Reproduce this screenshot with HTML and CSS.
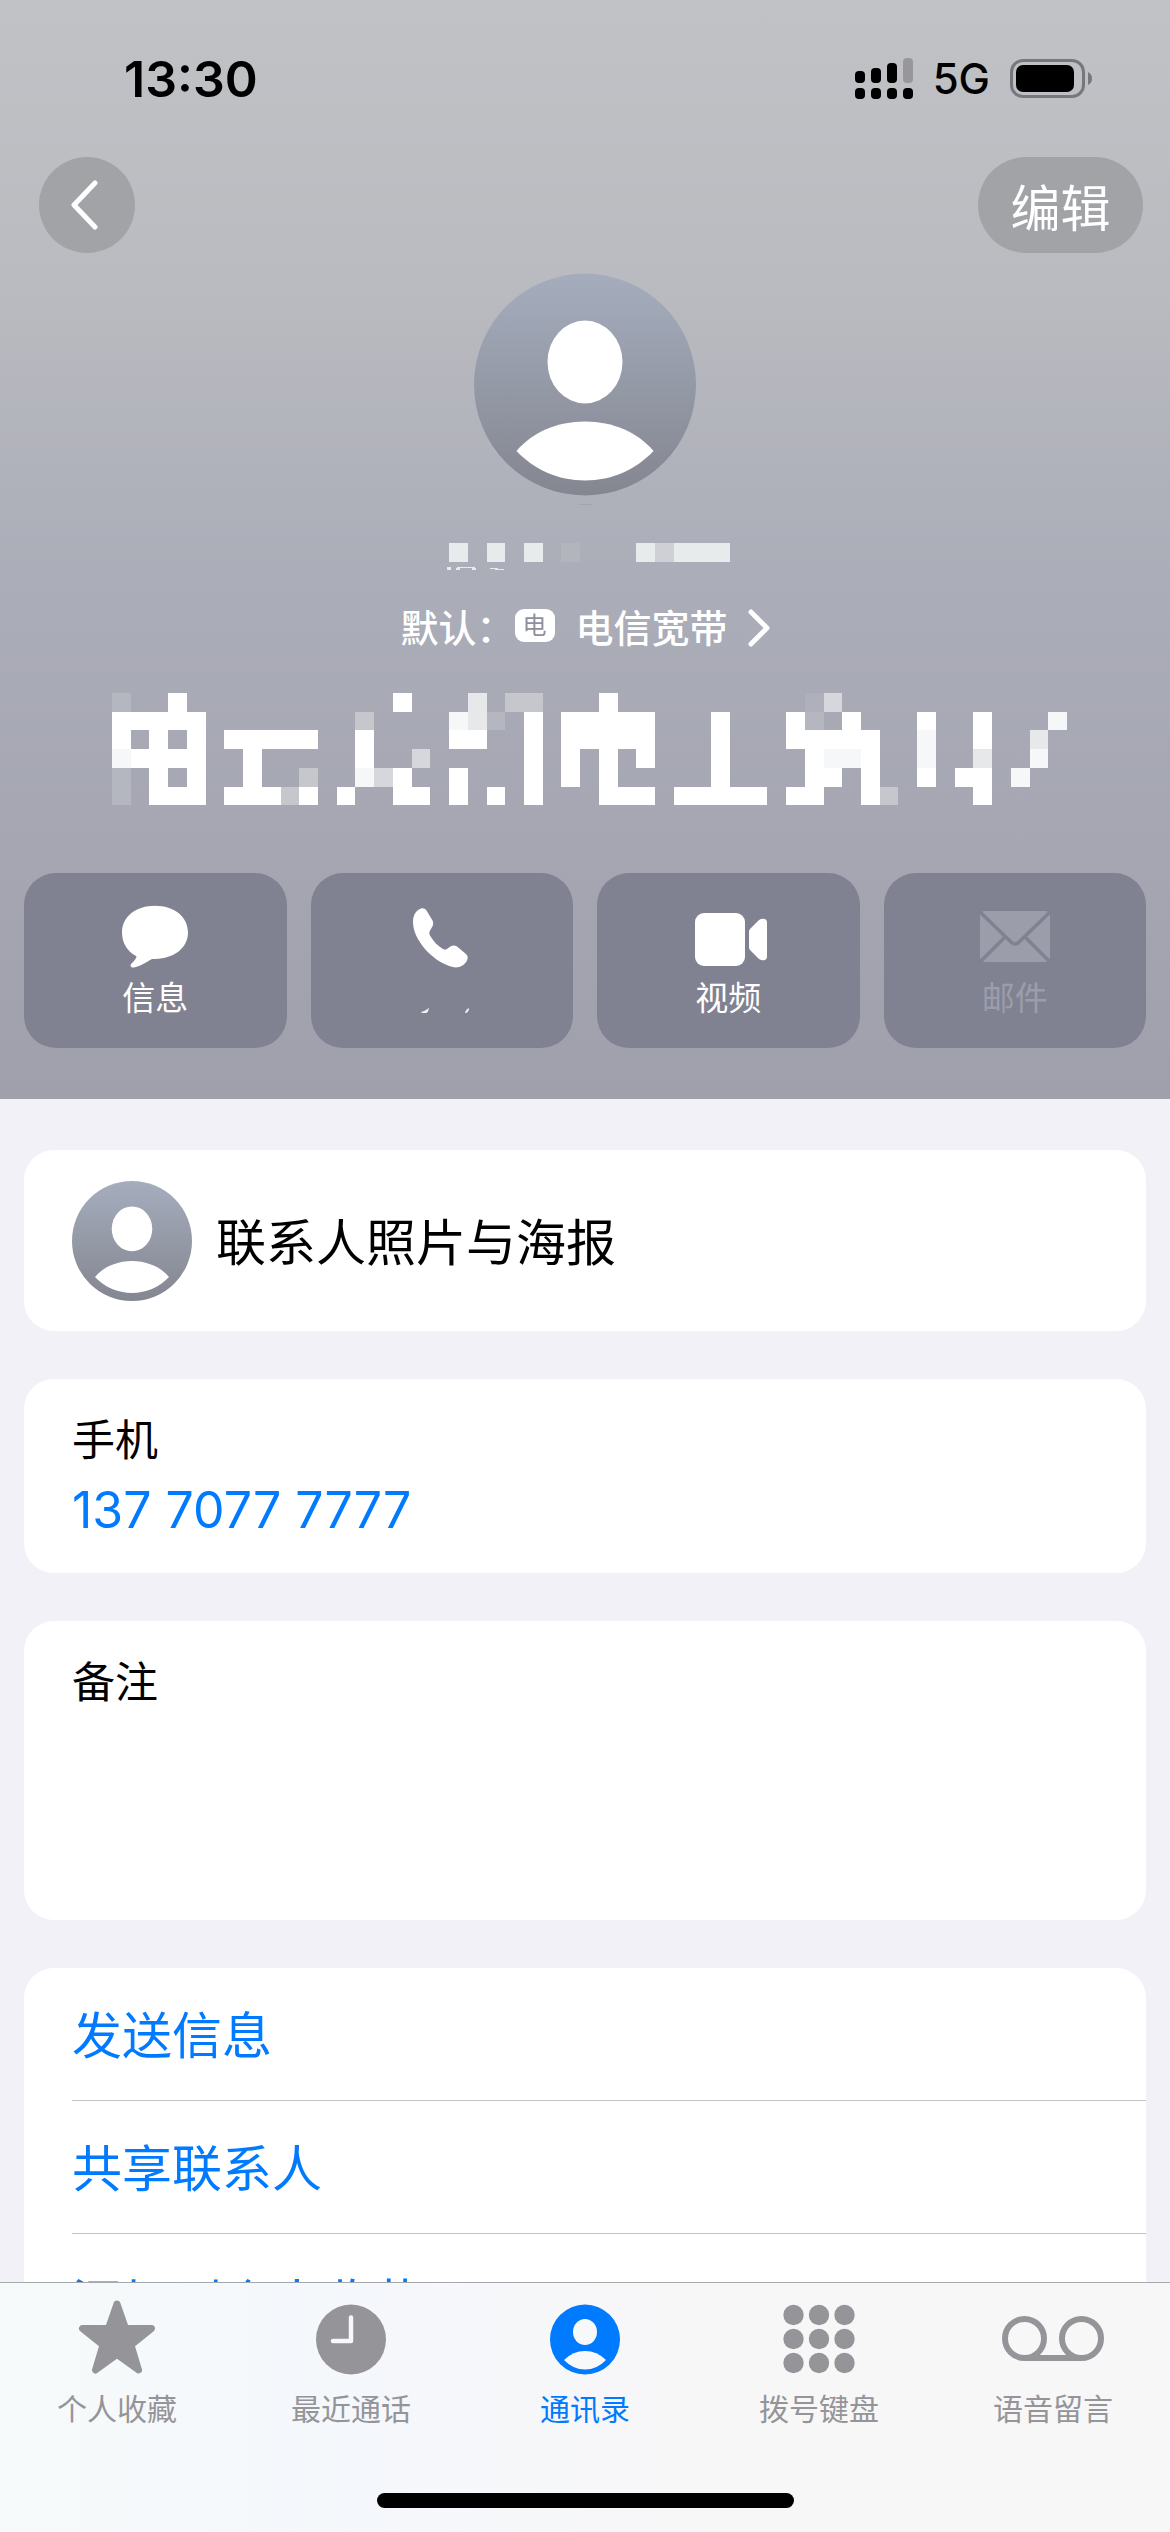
FILE: index.html
```html
<!DOCTYPE html>
<html lang="zh-CN">
<head>
<meta charset="utf-8">
<meta name="viewport" content="width=device-width, initial-scale=1">
<title>联系人</title>
<link rel="stylesheet" href="styles.css">
</head>
<body>
<svg class="defs" width="0" height="0" aria-hidden="true">
  <defs>
    <linearGradient id="avatar-fill" x1="0" y1="0" x2="0" y2="1">
      <stop offset="0" stop-color="#a5adbd"/>
      <stop offset="1" stop-color="#848690"/>
    </linearGradient>
    <symbol id="avatar" viewBox="0 0 222 222">
      <circle cx="111" cy="111" r="111" fill="url(#avatar-fill)"/>
      <ellipse cx="111" cy="88.500" rx="37.500" ry="41.500" fill="#fff"/>
      <path d="M42.500 177.500C58 159 83 148 111 148S164 159 179.500 177.500C162 196 138 207 111 207S60 196 42.500 177.500Z" fill="#fff"/>
    </symbol>
  </defs>
</svg>

<main class="screen">
  <header class="hero">
    <div class="status">
      <span class="clock">13:30</span>
      <div class="status-icons">
        <svg width="58" height="42" viewBox="0 0 58 42" aria-hidden="true">
          <rect x="0" y="13" width="10" height="12" rx="4"/>
          <rect x="16" y="10" width="10" height="15" rx="4"/>
          <rect x="32" y="5" width="10" height="20" rx="4"/>
          <rect x="48" y="0" width="10" height="25" rx="4" fill="#97979b"/>
          <rect x="0" y="30" width="10" height="11" rx="4"/>
          <rect x="16" y="30" width="10" height="11" rx="4"/>
          <rect x="32" y="30" width="10" height="11" rx="4"/>
          <rect x="48" y="30" width="10" height="11" rx="4"/>
        </svg>
        <span class="network">5G</span>
        <svg width="82" height="40" viewBox="0 0 82 40" aria-hidden="true">
          <rect x="1.500" y="1.500" width="72" height="36" rx="11.500" fill="none" stroke="#77787c" stroke-width="3"/>
          <rect x="6" y="6" width="58" height="27" rx="7"/>
          <path d="M78 13q4 2 4 6.500T78 26Z" fill="#77787c"/>
        </svg>
      </div>
    </div>

    <nav class="toolbar">
      <button class="pill back" aria-label="返回">
        <svg width="28" height="50" viewBox="0 0 28 50"><path d="M25 3L4 25 25 47" fill="none" stroke="#fff" stroke-width="5" stroke-linecap="round" stroke-linejoin="round"/></svg>
      </button>
      <button class="pill edit">编辑</button>
    </nav>

    <svg class="portrait"><use href="#avatar"/></svg>

    <svg class="subtitle" viewBox="103 500 964 72" aria-hidden="true" shape-rendering="crispEdges">
      <path d="M579 504h13v1h-13z" fill="#a3a5ad"/>
      <g fill="#e8ebec">
        <path d="M449 543h19v19h-19zM487 543h18v19h-18zM524 543h19v19h-19zM636 543h19v19h-19zM674 543h56v19h-56z"/>
        <path d="M447 567h4v3h-4zM457 567h18v1h-18zM456 568h4v2h-4zM472 568h4v2h-4zM490 568h8v1h-8zM495 569h9v1h-9z"/>
      </g>
      <path d="M561 543h19v19h-19z" fill="#b3b5bd"/>
      <path d="M655 543h19v19h-19z" fill="#cfd0d5"/>
    </svg>

    <button class="line">
      <span>默认：</span>
      <span class="sim">电</span>
      <span class="carrier">电信宽带</span>
      <svg width="22" height="38" viewBox="0 0 22 38" aria-hidden="true"><path d="M3 3L19 19 3 35" fill="none" stroke="#fff" stroke-width="5" stroke-linecap="round" stroke-linejoin="round"/></svg>
    </button>

    <svg class="masked-name" viewBox="-0.480 0 51.480 6" aria-hidden="true" shape-rendering="crispEdges">
      <path fill="#fff" d="M3 0h1v1h-1zM15 0h1v1h-1zM26 0h1v1h-1z
        M0 1h5v1h-5zM22 1h1v5h-1zM24 1h5v2h-5zM32 1h1v5h-1zM36 1h1v2h-1zM39 1h1v2h-1zM43 1h1v1h-1zM46 1h1v2h-1z
        M0 2h1v1h-1zM2 2h1v1h-1zM4 2h1v4h-1zM6 2h5v1h-5zM13 2h1v2h-1zM18 2h2v1h-2zM37 2h4v1h-4z
        M1 3h3v1h-3zM7 3h1v2h-1zM24 3h1v2h-1zM26 3h1v3h-1zM28 3h1v1h-1zM37 3h1v3h-1zM40 3h1v3h-1z
        M2 4h1v2h-1zM15 4h1v2h-1zM18 4h1v2h-1zM38 4h1v1h-1zM43 4h1v1h-1zM45 4h2v1h-2z
        M3 5h1v1h-1zM6 5h3v1h-3zM10 5h1v1h-1zM12 5h1v1h-1zM16 5h1v1h-1zM20 5h1v1h-1zM27 5h2v1h-2zM30 5h5v1h-5zM36 5h1v1h-1zM46 5h1v1h-1z"/>
      <path fill="#f6f7f9" d="M18 1h1v1h-1zM50 1h1v1h-1zM43 2h1v2h-1zM38 3h2v1h-2zM49 3h1v1h-1zM48 4h1v1h-1zM13 4h1v1h-1zM0 3h1v1h-1z"/>
      <path fill="#e6e8ea" d="M19 0h1v2h-1zM49 2h1v1h-1zM46 3h1v1h-1z"/>
      <path fill="#d5d7dc" d="M38 0h1v1h-1zM16 3h1v1h-1zM14 4h1v1h-1z"/>
      <path fill="#c5c7cd" d="M13 1h1v1h-1zM10 4h1v1h-1zM9 5h1v1h-1zM41 5h1v1h-1zM21 0h2v1h-2z"/>
      <path fill="#b5b7c0" d="M0 0h1v1h-1zM20 1h1v1h-1zM37 1h1v1h-1zM0 4h1v2h-1z"/>
      <path fill="#afb0bb" d="M37 0h1v1h-1z"/>
    </svg>

    <div class="actions">
      <button class="action">
        <svg width="72" height="64" viewBox="0 0 72 64" aria-hidden="true"><path d="M36 2C55 2 69 14 69 31.500S55 61 36 61h-3C27 65 20 69.500 15 70.500c-3 .500-4.500-2-2.500-4.500 3-3 5-6 5-8C8 53 3 43 3 31.500 3 14 17 2 36 2Z" transform="matrix(1 0 0 .9 0 0)" fill="#fff"/></svg>
        <span>信息</span>
      </button>
      <button class="action" aria-label="手机">
        <svg width="72" height="64" viewBox="0 0 72 64" aria-hidden="true"><path d="M7 18C7 10 11 6 15 4.500c2-.500 4 0 5.500 2l6 10c1.500 3 .500 5-1 7.500-1.500 2.500-3 4.500-1.500 7.500 3.500 6 8 10.500 13 13.500 2.500 1.500 4 0 6-1.500 2.500-2 5-3 8-1l9 7.500c2 2 2 4 1 6.500-2.500 5-8 8-14.500 6.500C27 58 7 36 7 18Z" fill="#fff"/></svg>
        <svg width="66" height="48" viewBox="0 0 66 48" aria-hidden="true"><path d="M12 38q4-1 8-4-1 5-3 5h-4zM56 39q1-4 4-5 0 4-3 5z" fill="#f2f2f5"/></svg>
      </button>
      <button class="action">
        <svg width="74" height="64" viewBox="-3 -1 74 64" aria-hidden="true"><g fill="#fff"><rect x="1" y="8" width="50" height="53" rx="9"/><path d="M55 27q0-2 1-3l9-9q3-2 6-1 2 1 2 3v35q0 2-2 3-3 1-6-1l-9-9q-1-1-1-3Z"/></g></svg>
        <span>视频</span>
      </button>
      <button class="action" disabled>
        <svg width="72" height="64" viewBox="0 0 72 64" aria-hidden="true"><rect x="1" y="7" width="70" height="51" rx="5" fill="currentColor"/><path d="M1 8L32 38q4 4 8 0L71 8M1 58L26 33M71 58L46 33" fill="none" stroke="#808191" stroke-width="3.500"/></svg>
        <span>邮件</span>
      </button>
    </div>
  </header>

  <div class="cards">
    <button class="card poster">
      <svg class="thumb"><use href="#avatar"/></svg>
      <span class="poster-title">联系人照片与海报</span>
    </button>
    <section class="card phone">
      <h2 class="label">手机</h2>
      <a class="number" href="tel:13770777777">137 7077 7777</a>
    </section>
    <section class="card notes">
      <label class="label" for="notes">备注</label>
      <textarea id="notes" rows="3"></textarea>
    </section>
    <section class="card links">
      <button class="link">发送信息</button>
      <button class="link">共享联系人</button>
      <button class="link">添加到个人收藏</button>
    </section>
  </div>
</main>

<footer class="tabbar">
  <nav class="tabs">
    <a class="tab" href="#favorites">
      <svg width="78" height="76" viewBox="0 0 78 76" aria-hidden="true"><path d="M39 4L47.500 28.500H73.500L53 45 60.500 70 39 54.500 17.500 70 25 45 4.500 28.500H30.500Z" fill="currentColor" stroke="currentColor" stroke-width="7" stroke-linejoin="round"/></svg>
      <span>个人收藏</span>
    </a>
    <a class="tab" href="#recents">
      <svg width="78" height="76" viewBox="0 0 78 76" aria-hidden="true"><circle cx="39" cy="39.500" r="35" fill="currentColor"/><path d="M39 17.500V41H21" fill="none" stroke="#f6f8fb" stroke-width="4.500" stroke-linecap="round" stroke-linejoin="round"/></svg>
      <span>最近通话</span>
    </a>
    <a class="tab current" href="#contacts" aria-current="page">
      <svg width="78" height="76" viewBox="0 0 78 76" aria-hidden="true"><circle cx="39" cy="39.500" r="35" fill="currentColor"/><ellipse cx="39" cy="32" rx="12" ry="13" fill="#f7f8fa"/><path d="M18 60Q27 51 39 51T60 60Q51 69.500 39 69.500T18 60Z" fill="#f7f8fa"/></svg>
      <span>通讯录</span>
    </a>
    <a class="tab" href="#keypad">
      <svg width="78" height="76" viewBox="0 0 78 76" aria-hidden="true"><g fill="currentColor"><circle cx="13.500" cy="15" r="10.200"/><circle cx="39" cy="15" r="10.200"/><circle cx="64.500" cy="15" r="10.200"/><circle cx="13.500" cy="39" r="10.200"/><circle cx="39" cy="39" r="10.200"/><circle cx="64.500" cy="39" r="10.200"/><circle cx="13.500" cy="63" r="10.200"/><circle cx="39" cy="63" r="10.200"/><circle cx="64.500" cy="63" r="10.200"/></g></svg>
      <span>拨号键盘</span>
    </a>
    <a class="tab" href="#voicemail">
      <svg width="104" height="76" viewBox="0 0 104 76" aria-hidden="true"><g fill="none" stroke="currentColor" stroke-width="6"><circle cx="23.500" cy="38.500" r="19.500"/><circle cx="80.500" cy="38.500" r="19.500"/><path d="M23.500 58H80.500"/></g></svg>
      <span>语音留言</span>
    </a>
  </nav>
  <div class="home"></div>
</footer>
</body>
</html>
```
FILE: styles.css
```css
* {
  box-sizing: border-box;
}

body {
  margin: 0;
  height: 100vh;
  display: flex;
  flex-direction: column;
  background: #f2f1f8;
  color: #000;
  font-family: Inter, "Noto Sans CJK SC", sans-serif;
}

svg {
  display: block;
  flex: none;
}

.defs {
  position: absolute;
}

button {
  border: 0;
  padding: 0;
  background: none;
  color: inherit;
  font: inherit;
}

a {
  color: inherit;
  text-decoration: none;
}

.screen {
  flex: 1;
  min-height: 0;
  overflow-y: auto;
  scrollbar-width: none;
}

/* Header */

.hero {
  display: flex;
  flex-direction: column;
  align-items: center;
  padding-bottom: 51px;
  background: linear-gradient(#c1c2c6 0%, #babbc0 26%, #abadb8 52%, #a5a6b2 78%, #a0a0ad 100%);
}

.status {
  align-self: stretch;
  display: flex;
  justify-content: space-between;
  align-items: center;
  height: 157px;
  padding: 0 78px 0 124px;
}

.clock {
  font-size: 50px;
  font-weight: 600;
}

.status-icons {
  display: flex;
  align-items: center;
  gap: 20px;
}

.network {
  font-size: 42px;
  font-weight: 500;
}

.toolbar {
  align-self: stretch;
  display: flex;
  justify-content: space-between;
  padding: 0 27px 20px 39px;
}

.pill {
  display: flex;
  align-items: center;
  justify-content: center;
  height: 96px;
  border-radius: 48px;
  background: #a2a3a6;
  color: #fff;
  font-size: 50px;
}

.back {
  width: 96px;
  padding-right: 6px;
}

.edit {
  width: 165px;
}

.portrait {
  width: 222px;
  height: 223px;
}

.subtitle {
  width: 964px;
  max-width: 100%;
  margin-top: 4px;
}

.line {
  display: flex;
  align-items: center;
  height: 56px;
  margin: 28px 0 37px;
  color: #fff;
  font-size: 38px;
  font-weight: 500;
}

.line > span {
  margin-bottom: 6px;
}

.line .sim {
  width: 40px;
  height: 33px;
  border-radius: 9px;
  background: #fff;
  color: #8f909c;
  font-size: 24px;
  font-weight: 400;
  line-height: 33px;
}

.line .carrier {
  margin-left: 21px;
  margin-right: 20px;
}

.masked-name {
  width: 964px;
  max-width: 100%;
}

.actions {
  align-self: stretch;
  display: grid;
  grid-template-columns: repeat(4, 1fr);
  gap: 24px;
  margin-top: 68px;
  padding: 0 24px;
}

.action {
  display: flex;
  flex-direction: column;
  align-items: center;
  gap: 6px;
  height: 175px;
  padding-top: 31px;
  border-radius: 32px;
  background: #808191;
  color: #fff;
  font-size: 33px;
  line-height: 48px;
}

.action svg {
  overflow: visible;
}

.action:disabled {
  color: #9c9dab;
}

/* Cards */

.cards {
  display: flex;
  flex-direction: column;
  gap: 48px;
  padding: 51px 24px;
}

.card {
  border-radius: 30px;
  background: #fff;
}

.poster {
  display: flex;
  align-items: center;
  gap: 24px;
  height: 181px;
  padding: 0 48px;
  font-size: 50px;
}

.poster-title {
  padding-bottom: 4px;
}

.thumb {
  width: 120px;
  height: 120px;
}

.label {
  display: block;
  margin: 0;
  font-size: 43px;
  font-weight: 400;
  line-height: 62px;
}

.phone {
  height: 194px;
  padding: 30px 48px;
}

.number {
  display: block;
  color: #007aff;
  font-size: 50px;
  line-height: 78px;
}

.notes {
  height: 299px;
  padding: 30px 48px;
}

.notes textarea {
  display: block;
  width: 100%;
  border: 0;
  padding: 0;
  background: none;
  font: inherit;
  font-size: 43px;
  resize: none;
}

.links {
  padding-left: 48px;
}

.link {
  display: block;
  width: 100%;
  height: 133px;
  padding-bottom: 4px;
  border-bottom: 1px solid #c4c4c7;
  color: #007aff;
  font-size: 50px;
  text-align: left;
}

.link:last-child {
  border-bottom: 0;
}

/* Tab bar */

.tabbar {
  display: flex;
  flex-direction: column;
  align-items: center;
  justify-content: space-between;
  height: 250px;
  padding: 17px 0 24px;
  border-top: 1px solid #a9a9ad;
  background: linear-gradient(90deg, #f7fafa, #f4f8fc 25%, #f7f7f9 50%, #f7f7f8);
}

.tabs {
  align-self: stretch;
  display: grid;
  grid-template-columns: repeat(5, 1fr);
}

.tab {
  display: flex;
  flex-direction: column;
  align-items: center;
  gap: 11px;
  color: #959599;
  font-size: 30px;
  line-height: 44px;
}

.current {
  color: #007aff;
}

.home {
  width: 417px;
  height: 15px;
  border-radius: 8px;
  background: #000;
}
```
